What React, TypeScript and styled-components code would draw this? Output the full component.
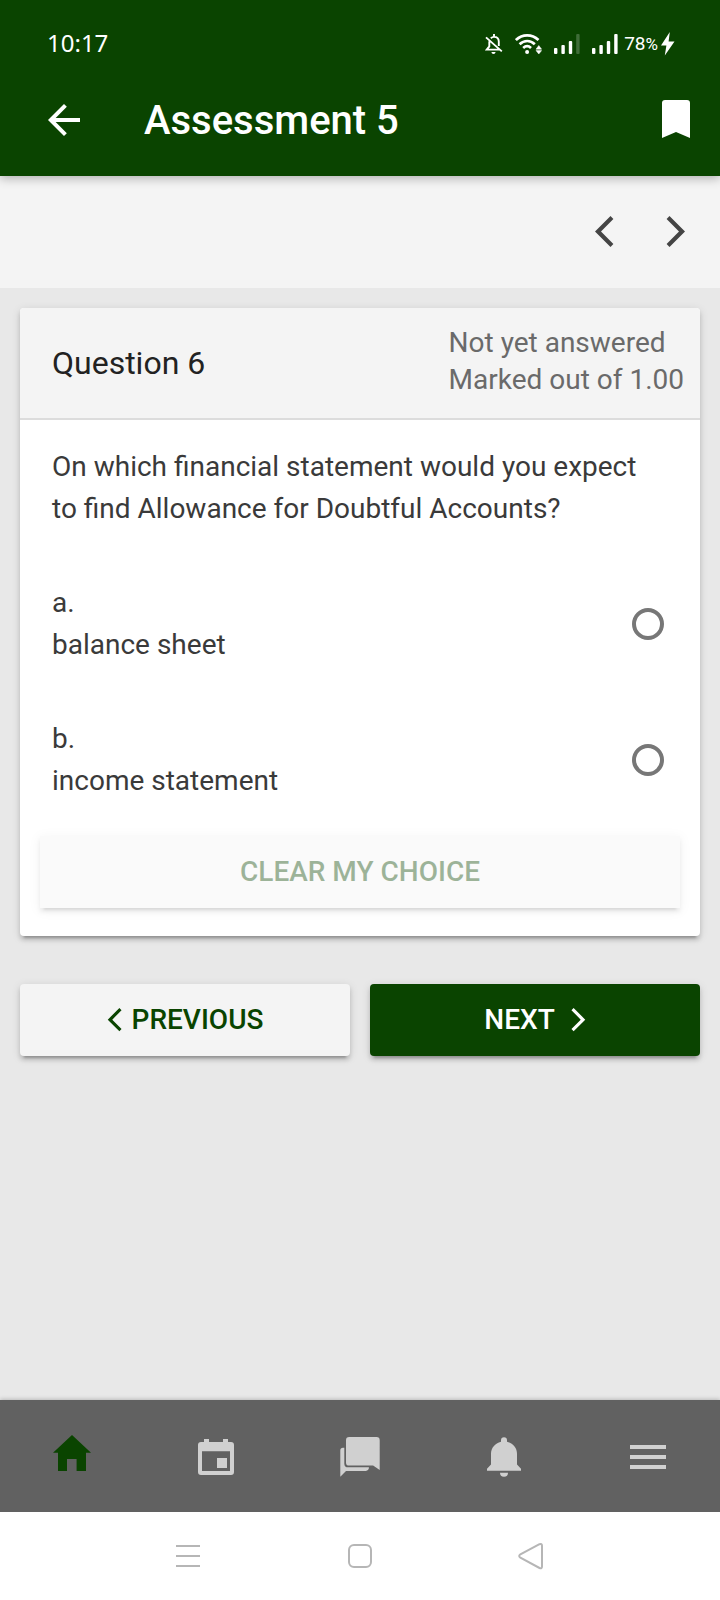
import React from "react";
import styled, { createGlobalStyle, css } from "styled-components";

const green = "#0a4400";
const raised = css`
  box-shadow: 0 6px 2px -4px rgba(0, 0, 0, 0.2), 0 4px 4px rgba(0, 0, 0, 0.14),
    0 2px 10px rgba(0, 0, 0, 0.12);
`;

const GlobalStyle = createGlobalStyle`
  *, *::before, *::after { box-sizing: border-box; }
  body {
    margin: 0;
    background: #e8e8e8;
    color: #3a3a3a;
    font-family: Roboto, "Liberation Sans", sans-serif;
    font-size: 28px;
    line-height: 42px;
  }
  button { font: inherit; color: inherit; border: 0; padding: 0; background: none; cursor: pointer; }
  svg { display: block; flex: none; }
`;

const Page = styled.div`
  display: flex;
  flex-direction: column;
  min-height: 100vh;
`;

const Header = styled.header`
  position: relative;
  background: ${green};
  color: #fff;
  box-shadow: 0 2px 10px rgba(0, 0, 0, 0.3);
`;

const StatusBar = styled.div`
  display: flex;
  align-items: center;
  justify-content: space-between;
  height: 64px;
  padding: 24px 45px 0 47px;
`;

const Clock = styled.time`
  padding-bottom: 2px;
  font-family: "Noto Sans", sans-serif;
  font-size: 24px;
  line-height: 40px;
`;

const StatusIcons = styled.div`
  display: flex;
  align-items: center;
  gap: 12px;
`;

const Battery = styled.span`
  display: flex;
  align-items: center;
  gap: 3px;
  margin-left: -6px;
  font-size: 19px;
  line-height: 24px;
`;

const Percent = styled.span`
  font-size: 17px;
`;

const Toolbar = styled.div`
  display: flex;
  align-items: center;
  height: 112px;
  padding: 0 8px 0 28px;
`;

const Title = styled.h1`
  flex: 1;
  margin: 0 0 0 44px;
  padding-top: 2px;
  font-size: 40px;
  font-weight: 500;
  line-height: 48px;
`;

const IconButton = styled.button`
  display: flex;
  align-items: center;
  justify-content: center;
  width: 72px;
  height: 72px;
`;

const Pager = styled.nav`
  display: flex;
  align-items: center;
  justify-content: flex-end;
  height: 112px;
  padding: 0 8px;
  background: #f4f4f4;
  color: #444;
`;

const Main = styled.main`
  flex: 1;
  padding: 20px;
`;

const Card = styled.section`
  border-radius: 4px;
  padding-bottom: 28px;
  background: #fff;
  ${raised}
`;

const CardHeader = styled.header`
  display: flex;
  align-items: center;
  justify-content: space-between;
  height: 112px;
  padding: 0 16px 0 32px;
  border-bottom: 2px solid #dcdcdc;
  border-radius: 4px 4px 0 0;
  background: #f4f4f4;
`;

const QuestionNumber = styled.h2`
  margin: 0;
  color: #222;
  font-size: 32px;
  font-weight: 400;
`;

const QuestionState = styled.p`
  margin: 0;
  padding-bottom: 4px;
  color: #6a6a6a;
  line-height: 37px;
`;

const QuestionText = styled.p`
  margin: 0;
  padding: 26px 48px 26px 32px;
`;

const Option = styled.label`
  display: flex;
  align-items: center;
  justify-content: space-between;
  padding: 26px 36px 26px 32px;
  cursor: pointer;
`;

const OptionText = styled.span`
  display: flex;
  flex-direction: column;
`;

const Radio = styled.input`
  appearance: none;
  flex: none;
  width: 32px;
  height: 32px;
  margin: 0;
  border: 4px solid #777;
  border-radius: 50%;

  &:checked {
    border-color: ${green};
    background: radial-gradient(${green} 8px, transparent 9px);
  }
`;

const Button = styled.button<{ $primary?: boolean }>`
  display: flex;
  align-items: center;
  justify-content: center;
  flex: 1;
  gap: ${(p) => (p.$primary ? 16 : 10)}px;
  height: 72px;
  border-radius: 4px;
  background: ${(p) => (p.$primary ? green : "#f4f4f4")};
  color: ${(p) => (p.$primary ? "#fff" : green)};
  font-weight: 500;
  text-transform: uppercase;
  ${raised}

  &:disabled {
    opacity: 0.4;
    border-radius: 0;
    color: ${green};
    cursor: default;
  }
`;

const ClearRow = styled.div`
  display: flex;
  padding: 8px 20px 0;
`;

const Actions = styled.div`
  display: flex;
  gap: 20px;
  margin-top: 48px;
`;

const TabBar = styled.nav`
  position: relative;
  display: flex;
  height: 112px;
  background: #616161;
  box-shadow: 0 -1px 4px rgba(0, 0, 0, 0.2);
`;

const Tab = styled.a<{ $active?: boolean }>`
  display: flex;
  flex: 1;
  align-items: center;
  justify-content: center;
  color: ${(p) => (p.$active ? green : "#d0d0d0")};
`;

const SystemBar = styled.div`
  position: relative;
  display: flex;
  justify-content: center;
  height: 88px;
  background: #fff;
  color: #b6b6b6;
`;

const SystemButton = styled.button`
  display: flex;
  align-items: center;
  justify-content: center;
  width: 172px;
`;

function Chevron({ right, small }: { right?: boolean; small?: boolean }) {
  return (
    <svg width={small ? 15 : 20} height={small ? 24 : 32} viewBox="0 0 20 32" fill="currentColor" aria-hidden="true">
      <path
        d={
          right
            ? "M19 15.5 3.500 0 .600 2.900 13 15.500.600 28.100 3.500 31z"
            : "M1 15.500 16.500 0l2.900 2.900L7 15.500l12.400 12.600-2.900 2.900z"
        }
      />
    </svg>
  );
}

function Signal({ weak }: { weak?: boolean }) {
  return (
    <svg width="26" height="20" viewBox="0 0 26 20" fill="currentColor" aria-hidden="true">
      <rect x="0" y="14" width="3.4" height="6" rx="1" />
      <rect x="7.4" y="11" width="3.4" height="9" rx="1" />
      <rect x="14.8" y="7" width="3.4" height="13" rx="1" />
      <rect x="22.2" y="0" width="3.4" height="20" rx="1" opacity={weak ? 0.22 : 1} />
    </svg>
  );
}

function MutedBell() {
  return (
    <svg width="18" height="20" viewBox="0 0 18 20" fill="none" stroke="currentColor" strokeWidth="1.9" aria-hidden="true">
      <path d="M1 3.4 16.8 17.4M4.3 7.2v5.2L1.8 15.6h12.4M5.8 4.2c1-.9 2-1.3 3.2-1.3 2.9 0 4.8 2 4.8 4.8v4.4M9 0v3" />
      <path d="M6.5 18h4c0 1.2-.8 2-2 2s-2-.8-2-2z" fill="currentColor" stroke="none" />
    </svg>
  );
}

function Wifi() {
  return (
    <svg width="27" height="20" viewBox="0 0 27 20" fill="none" stroke="currentColor" strokeWidth="2.7" aria-hidden="true">
      <path d="M.9 6.1c6.5-6.2 16-6.2 22.6 0M4.6 10.2c4.5-4.3 10.8-4.3 15.2 0M8.2 14c2.4-2.2 5.5-2.2 7.8 0" />
      <circle cx="12.1" cy="18" r="2" fill="currentColor" stroke="none" />
      <path d="M21 15.2 23.8 11.500l2.800 3.700zM21 16.600l2.800 3.400 2.800-3.400z" fill="currentColor" stroke="currentColor" strokeWidth=".5" />
    </svg>
  );
}

const tabs = [
  { name: "Home", path: "M24 3 43 20.7H38V39h-9.4V27H19v12h-9V20.7H5z" },
  {
    name: "Calendar",
    path: "M12 7h5v3h14V7h5v3h3a3 3 0 0 1 3 3v27a3 3 0 0 1-3 3H9a3 3 0 0 1-3-3V13a3 3 0 0 1 3-3h3zM10 19.3V39h28V19.3zM25 26h10v10H25z",
  },
  {
    name: "Messages",
    path: "M13.2 5h27.3a3.2 3.2 0 0 1 3.2 3.2V38l-6.6-4.4H13.2a3.2 3.2 0 0 1-3.2-3.2V8.2A3.2 3.2 0 0 1 13.2 5zM8.3 15.7H7a2.7 2.7 0 0 0-2.7 2.7v26.3L10 39h19.8a3.2 3.2 0 0 0 3.1-3.7H12.2a3.9 3.9 0 0 1-3.9-3.9z",
  },
  {
    name: "Notifications",
    path: "M24 5.3a3 3 0 0 1 3 3v1.5c6 1.5 10 6.2 10 12v10.7l4 4.2v2H7v-2l4-4.2V21.800c0-5.800 4-10.500 10-12V8.300a3 3 0 0 1 3-3zM20 40.700h8a4 4 0 0 1-8 0z",
  },
  { name: "More", path: "M6 13h36v4H6zM6 23h36v4H6zM6 33h36v4H6z" },
];

const options = [
  { letter: "a.", text: "balance sheet" },
  { letter: "b.", text: "income statement" },
];

export default function App() {
  const [choice, setChoice] = React.useState<string | null>(null);

  return (
    <Page>
      <GlobalStyle />
      <Header>
        <StatusBar>
          <Clock>10:17</Clock>
          <StatusIcons>
            <MutedBell />
            <Wifi />
            <Signal weak />
            <Signal />
            <Battery>
              <span>
                78<Percent>%</Percent>
              </span>
              <svg width="14" height="24" viewBox="0 0 14 24" fill="currentColor" aria-hidden="true">
                <path d="M8.800 0 0 13.500h5.400L3.800 23.500 13.500 9.500H7.600z" />
              </svg>
            </Battery>
          </StatusIcons>
        </StatusBar>
        <Toolbar>
          <IconButton aria-label="Back">
            <svg width="48" height="48" viewBox="0 0 24 24" fill="currentColor" aria-hidden="true">
              <path d="M20 11H7.830l5.590-5.590L12 4l-8 8 8 8 1.410-1.410L7.830 13H20z" />
            </svg>
          </IconButton>
          <Title>Assessment 5</Title>
          <IconButton aria-label="Bookmark">
            <svg width="30" height="40" viewBox="0 0 30 40" fill="currentColor" aria-hidden="true">
              <path d="M4 0h22a3 3 0 0 1 3 3v35l-14-6L1 38V3a3 3 0 0 1 3-3z" />
            </svg>
          </IconButton>
        </Toolbar>
      </Header>

      <Pager aria-label="Question pages">
        <IconButton aria-label="Previous page">
          <Chevron />
        </IconButton>
        <IconButton aria-label="Next page">
          <Chevron right />
        </IconButton>
      </Pager>

      <Main>
        <Card>
          <CardHeader>
            <QuestionNumber>Question 6</QuestionNumber>
            <QuestionState>
              Not yet answered
              <br />
              Marked out of 1.00
            </QuestionState>
          </CardHeader>
          <QuestionText>
            On which financial statement would you expect to find Allowance for Doubtful Accounts?
          </QuestionText>
          {options.map((o) => (
            <Option key={o.letter}>
              <OptionText>
                <span>{o.letter}</span>
                <span>{o.text}</span>
              </OptionText>
              <Radio
                type="radio"
                name="answer"
                value={o.letter}
                checked={choice === o.letter}
                onChange={() => setChoice(o.letter)}
              />
            </Option>
          ))}
          <ClearRow>
            <Button type="button" disabled={choice === null} onClick={() => setChoice(null)}>
              Clear my choice
            </Button>
          </ClearRow>
        </Card>
        <Actions>
          <Button type="button">
            <Chevron small />
            Previous
          </Button>
          <Button type="button" $primary>
            Next
            <Chevron small right />
          </Button>
        </Actions>
      </Main>

      <TabBar aria-label="Main">
        {tabs.map((t, i) => (
          <Tab key={t.name} href={`#${t.name.toLowerCase()}`} aria-label={t.name} $active={i === 0}>
            <svg width="48" height="48" viewBox="0 0 48 48" fill="currentColor" fillRule="evenodd" aria-hidden="true">
              <path d={t.path} />
            </svg>
          </Tab>
        ))}
      </TabBar>

      <SystemBar>
        <SystemButton aria-label="Recent apps">
          <svg width="24" height="24" viewBox="0 0 24 24" stroke="currentColor" strokeWidth="2" aria-hidden="true">
            <path d="M0 2h24M0 12h24M0 22h24" />
          </svg>
        </SystemButton>
        <SystemButton aria-label="Home screen">
          <svg width="24" height="24" viewBox="0 0 24 24" fill="none" stroke="currentColor" strokeWidth="2" aria-hidden="true">
            <rect x="1" y="1" width="22" height="22" rx="5" />
          </svg>
        </SystemButton>
        <SystemButton aria-label="Go back">
          <svg width="28" height="28" viewBox="0 0 28 28" fill="none" stroke="currentColor" strokeWidth="2" aria-hidden="true">
            <path d="M21.500 2.200 2.400 12.300Q0 14 2.400 15.700L21.500 26Q24 27 24 24.500V3.700Q24 1.200 21.500 2.200z" />
          </svg>
        </SystemButton>
      </SystemBar>
    </Page>
  );
}
